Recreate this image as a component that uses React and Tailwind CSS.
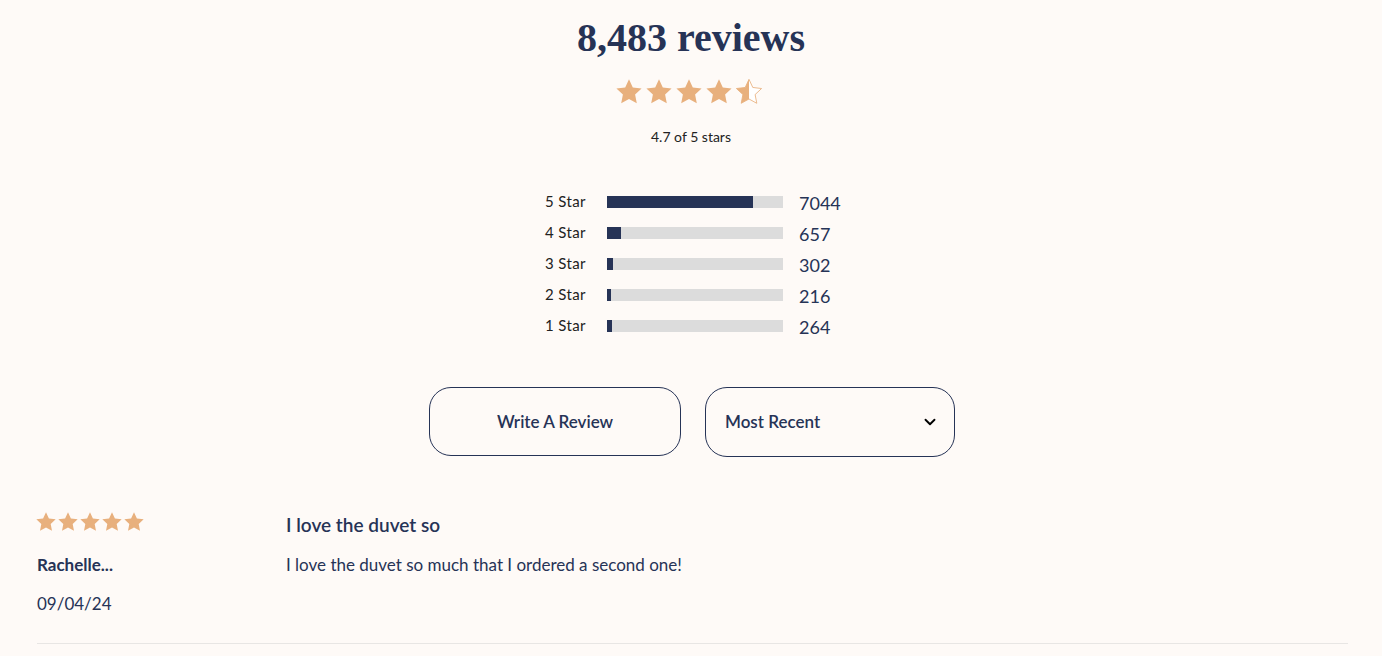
import { ChevronDown } from "lucide-react";

const STAR_PATH =
  "M12 1.5l3.09 6.6 7.16.86-5.28 4.93 1.38 7.11L12 17.5l-6.35 3.5 1.38-7.11L1.75 8.96l7.16-.86z";

const bars = [
  { label: "5 Star", count: 7044 },
  { label: "4 Star", count: 657 },
  { label: "3 Star", count: 302 },
  { label: "2 Star", count: 216 },
  { label: "1 Star", count: 264 },
];
const total = 8483;

function Star({ size = 24, half = false }) {
  return (
    <svg width={size} height={size} viewBox="1.4 1.2 21.2 21.2">
      {half ? (
        <>
          <defs>
            <clipPath id="halfclip">
              <rect x="0" y="0" width="12" height="24" />
            </clipPath>
          </defs>
          <path d={STAR_PATH} fill="#ffffff" stroke="#e8b07d" strokeWidth="0.7" />
          <path d={STAR_PATH} fill="#e8b07d" clipPath="url(#halfclip)" />
        </>
      ) : (
        <path d={STAR_PATH} fill="#e8b07d" />
      )}
    </svg>
  );
}

export default function App() {
  return (
    <div
      className="min-h-screen bg-[#fefaf7] text-[#263356]"
      style={{ fontFamily: "Lato, 'Open Sans', sans-serif" }}
    >
      <div className="flex flex-col items-center pt-[11px]">
        <h1
          className="text-[40px] font-bold leading-[54px] text-[#263356]"
          style={{ fontFamily: "'Liberation Serif', serif" }}
        >
          8,483 reviews
        </h1>
        <div className="mt-[14px] flex gap-[4px] -translate-x-[2px]">
          <Star size={26} />
          <Star size={26} />
          <Star size={26} />
          <Star size={26} />
          <Star size={26} half />
        </div>
        <p className="mt-[21px] text-[14px] text-[#222]">4.7 of 5 stars</p>

        <div className="mt-[45px] flex flex-col gap-[11px]">
          {bars.map((b) => (
            <div key={b.label} className="flex h-[20px] items-center">
              <span className="w-[62px] text-[15px] tracking-wide text-[#222] -translate-y-[1px]">
                {b.label}
              </span>
              <div className="h-[12px] w-[176px] bg-[#dcdcdc]">
                <div
                  className="h-full bg-[#263356]"
                  style={{ width: `${(b.count / total) * 100}%` }}
                />
              </div>
              <span className="ml-[16px] w-[38px] text-[18px] leading-none translate-y-[1px]">
                {b.count}
              </span>
            </div>
          ))}
        </div>

        <div className="mt-[51px] flex gap-[24px] translate-x-[1px]">
          <button className="flex h-[69px] w-[252px] items-center justify-center rounded-[22px] border border-[#263356] text-[17px] font-semibold">
            Write A Review
          </button>
          <button className="flex h-[70px] w-[250px] items-center justify-between rounded-[22px] border border-[#263356] pl-[19px] pr-[15px] text-[17px] font-semibold">
            <span>Most Recent</span>
            <ChevronDown size={18} strokeWidth={2.5} className="text-black" />
          </button>
        </div>
      </div>

      <div className="ml-[37px] mr-[34px] mt-[55px] flex border-b border-[#e8e6e4] pb-[27px]">
        <div className="w-[249px]">
          <div className="-ml-[1px] flex gap-[2px]">
            {[0, 1, 2, 3, 4].map((i) => (
              <Star key={i} size={20} />
            ))}
          </div>
          <p className="mt-[20px] text-[17px] font-bold">Rachelle...</p>
          <p className="mt-[13px] text-[17px]">09/04/24</p>
        </div>
        <div className="-mt-[1px]">
          <p className="text-[19px] font-semibold">I love the duvet so</p>
          <p className="mt-[12px] text-[17px]">
            I love the duvet so much that I ordered a second one!
          </p>
        </div>
      </div>
    </div>
  );
}
